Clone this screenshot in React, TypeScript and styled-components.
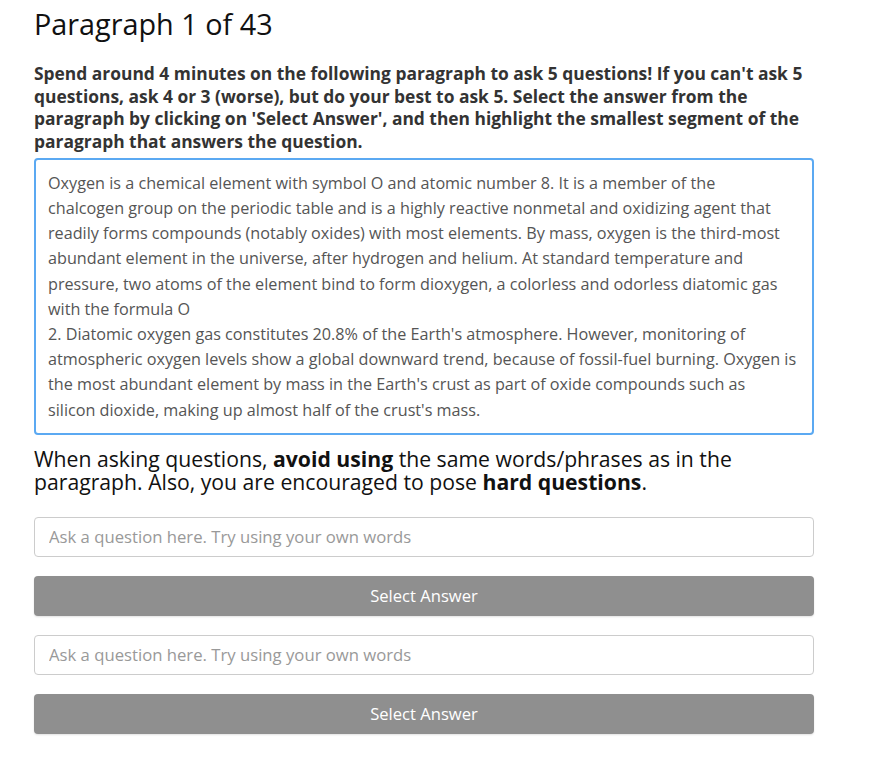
import * as React from "react";
import styled, { createGlobalStyle } from "styled-components";

const PASSAGE_BORDER = "#5ba9f2";
const BUTTON_GREY = "#8f8f8f";

// line breaks follow the original page's wrapping
const PASSAGE_LINES = [
  "Oxygen is a chemical element with symbol O and atomic number 8. It is a member of the",
  "chalcogen group on the periodic table and is a highly reactive nonmetal and oxidizing agent that",
  "readily forms compounds (notably oxides) with most elements. By mass, oxygen is the third-most",
  "abundant element in the universe, after hydrogen and helium. At standard temperature and",
  "pressure, two atoms of the element bind to form dioxygen, a colorless and odorless diatomic gas",
  "with the formula O",
  "2. Diatomic oxygen gas constitutes 20.8% of the Earth's atmosphere. However, monitoring of",
  "atmospheric oxygen levels show a global downward trend, because of fossil-fuel burning. Oxygen is",
  "the most abundant element by mass in the Earth's crust as part of oxide compounds such as",
  "silicon dioxide, making up almost half of the crust's mass.",
];

const GlobalStyle = createGlobalStyle`
  body {
    margin: 0;
    background: #fff;
    font-family: "Open Sans", "Noto Sans", sans-serif;
  }
`;

const Page = styled.div`
  width: 780px;
  padding: 4px 0 24px 34px;
`;

const Title = styled.h1`
  margin: 0;
  font-size: 28.8px;
  line-height: 40px;
  font-weight: 400;
  color: #111;
`;

const Instructions = styled.p`
  margin: 18px 0 0;
  font-size: 17.4px;
  line-height: 22.7px;
  font-weight: 700;
  color: #333;
`;

const Passage = styled.div`
  margin-top: 5px;
  padding: 11px 10px 10px 12px;
  border: 2px solid ${PASSAGE_BORDER};
  border-radius: 4px;
  font-size: 16.2px;
  line-height: 25.2px;
  color: #555;
`;

const PassageLine = styled.span`
  display: block;
  white-space: nowrap;
`;

const Advice = styled.h4`
  margin: 12.5px 0 0;
  font-size: 21.2px;
  line-height: 23px;
  font-weight: 400;
  color: #111;

  b {
    font-weight: 700;
  }
`;

const Questions = styled.div`
  display: flex;
  flex-direction: column;
  gap: 19px;
  margin-top: 23.5px;
`;

const QuestionInput = styled.input`
  box-sizing: border-box;
  width: 100%;
  height: 40px;
  padding: 0 14px;
  border: 1px solid #ccc;
  border-radius: 4px;
  font-family: inherit;
  font-size: 16.7px;
  color: #333;
  outline: none;

  &::placeholder {
    color: #999;
  }
`;

const SelectButton = styled.button`
  width: 100%;
  height: 40px;
  border: none;
  border-radius: 4px;
  background: ${BUTTON_GREY};
  box-shadow: 0 1px 2px rgba(0, 0, 0, 0.12);
  font-family: inherit;
  font-size: 16.6px;
  color: #fff;
  cursor: pointer;
`;

const QUESTION_COUNT = 2;

export default function App() {
  return (
    <>
      <GlobalStyle />
      <Page>
        <Title>Paragraph 1 of 43</Title>
        <Instructions>
          Spend around 4 minutes on the following paragraph to ask 5 questions! If you can't ask 5
          questions, ask 4 or 3 (worse), but do your best to ask 5. Select the answer from the
          paragraph by clicking on 'Select Answer', and then highlight the smallest segment of the
          paragraph that answers the question.
        </Instructions>
        <Passage>
          {PASSAGE_LINES.map((line, i) => (
            <PassageLine key={i}>{line}</PassageLine>
          ))}
        </Passage>
        <Advice>
          When asking questions, <b>avoid using</b> the same words/phrases as in the paragraph.
          Also, you are encouraged to pose <b>hard questions</b>.
        </Advice>
        <Questions>
          {Array.from({ length: QUESTION_COUNT }).map((_, i) => (
            <React.Fragment key={i}>
              <QuestionInput placeholder="Ask a question here. Try using your own words" />
              <SelectButton>Select Answer</SelectButton>
            </React.Fragment>
          ))}
        </Questions>
      </Page>
    </>
  );
}
